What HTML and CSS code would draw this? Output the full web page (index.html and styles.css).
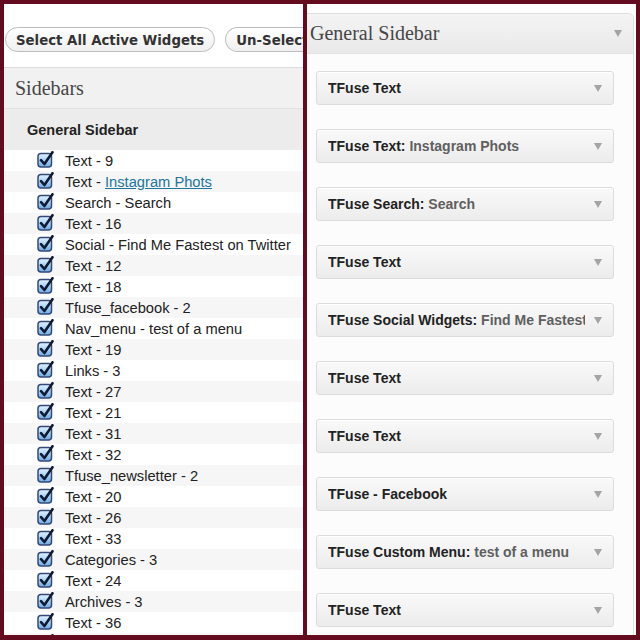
FILE: index.html
```html
<!DOCTYPE html>
<html>
<head>
<meta charset="utf-8">
<link rel="stylesheet" href="styles.css">
</head>
<body>
<svg class="defs" width="0" height="0" aria-hidden="true">
  <defs>
    <linearGradient id="cbfill" x1="0" y1="0" x2="0" y2="1">
      <stop offset="0" stop-color="#e4f3ff"/>
      <stop offset="0.5" stop-color="#a9d2f5"/>
      <stop offset="1" stop-color="#6fa9e0"/>
    </linearGradient>
  </defs>
</svg>
<div class="frame">
  <section class="left">
    <div class="actions">
      <span class="btn">Select All Active Widgets</span>
      <span class="btn btn-cut">Un-Select All Active Widgets</span>
    </div>
    <h2 class="sidebars-title">Sidebars</h2>
    <h3 class="group-title">General Sidebar</h3>
    <ul class="list">
      <li><svg class="cb" viewBox="0 0 17 17"><rect x="1" y="2.5" width="13.5" height="13.5" rx="3" fill="url(#cbfill)" stroke="#34497a" stroke-width="1.5"/><path d="M4 9.2 L7.4 13 L15.5 1.2" fill="none" stroke="#0f1a33" stroke-width="2.6" stroke-linecap="round" stroke-linejoin="round"/></svg><span>Text - 9</span></li>
      <li><svg class="cb" viewBox="0 0 17 17"><rect x="1" y="2.5" width="13.5" height="13.5" rx="3" fill="url(#cbfill)" stroke="#34497a" stroke-width="1.5"/><path d="M4 9.2 L7.4 13 L15.5 1.2" fill="none" stroke="#0f1a33" stroke-width="2.6" stroke-linecap="round" stroke-linejoin="round"/></svg><span>Text - <a class="lnk">Instagram Phots</a></span></li>
      <li><svg class="cb" viewBox="0 0 17 17"><rect x="1" y="2.5" width="13.5" height="13.5" rx="3" fill="url(#cbfill)" stroke="#34497a" stroke-width="1.5"/><path d="M4 9.2 L7.4 13 L15.5 1.2" fill="none" stroke="#0f1a33" stroke-width="2.6" stroke-linecap="round" stroke-linejoin="round"/></svg><span>Search - Search</span></li>
      <li><svg class="cb" viewBox="0 0 17 17"><rect x="1" y="2.5" width="13.5" height="13.5" rx="3" fill="url(#cbfill)" stroke="#34497a" stroke-width="1.5"/><path d="M4 9.2 L7.4 13 L15.5 1.2" fill="none" stroke="#0f1a33" stroke-width="2.6" stroke-linecap="round" stroke-linejoin="round"/></svg><span>Text - 16</span></li>
      <li><svg class="cb" viewBox="0 0 17 17"><rect x="1" y="2.5" width="13.5" height="13.5" rx="3" fill="url(#cbfill)" stroke="#34497a" stroke-width="1.5"/><path d="M4 9.2 L7.4 13 L15.5 1.2" fill="none" stroke="#0f1a33" stroke-width="2.6" stroke-linecap="round" stroke-linejoin="round"/></svg><span>Social - Find Me Fastest on Twitter</span></li>
      <li><svg class="cb" viewBox="0 0 17 17"><rect x="1" y="2.5" width="13.5" height="13.5" rx="3" fill="url(#cbfill)" stroke="#34497a" stroke-width="1.5"/><path d="M4 9.2 L7.4 13 L15.5 1.2" fill="none" stroke="#0f1a33" stroke-width="2.6" stroke-linecap="round" stroke-linejoin="round"/></svg><span>Text - 12</span></li>
      <li><svg class="cb" viewBox="0 0 17 17"><rect x="1" y="2.5" width="13.5" height="13.5" rx="3" fill="url(#cbfill)" stroke="#34497a" stroke-width="1.5"/><path d="M4 9.2 L7.4 13 L15.5 1.2" fill="none" stroke="#0f1a33" stroke-width="2.6" stroke-linecap="round" stroke-linejoin="round"/></svg><span>Text - 18</span></li>
      <li><svg class="cb" viewBox="0 0 17 17"><rect x="1" y="2.5" width="13.5" height="13.5" rx="3" fill="url(#cbfill)" stroke="#34497a" stroke-width="1.5"/><path d="M4 9.2 L7.4 13 L15.5 1.2" fill="none" stroke="#0f1a33" stroke-width="2.6" stroke-linecap="round" stroke-linejoin="round"/></svg><span>Tfuse_facebook - 2</span></li>
      <li><svg class="cb" viewBox="0 0 17 17"><rect x="1" y="2.5" width="13.5" height="13.5" rx="3" fill="url(#cbfill)" stroke="#34497a" stroke-width="1.5"/><path d="M4 9.2 L7.4 13 L15.5 1.2" fill="none" stroke="#0f1a33" stroke-width="2.6" stroke-linecap="round" stroke-linejoin="round"/></svg><span>Nav_menu - test of a menu</span></li>
      <li><svg class="cb" viewBox="0 0 17 17"><rect x="1" y="2.5" width="13.5" height="13.5" rx="3" fill="url(#cbfill)" stroke="#34497a" stroke-width="1.5"/><path d="M4 9.2 L7.4 13 L15.5 1.2" fill="none" stroke="#0f1a33" stroke-width="2.6" stroke-linecap="round" stroke-linejoin="round"/></svg><span>Text - 19</span></li>
      <li><svg class="cb" viewBox="0 0 17 17"><rect x="1" y="2.5" width="13.5" height="13.5" rx="3" fill="url(#cbfill)" stroke="#34497a" stroke-width="1.5"/><path d="M4 9.2 L7.4 13 L15.5 1.2" fill="none" stroke="#0f1a33" stroke-width="2.6" stroke-linecap="round" stroke-linejoin="round"/></svg><span>Links - 3</span></li>
      <li><svg class="cb" viewBox="0 0 17 17"><rect x="1" y="2.5" width="13.5" height="13.5" rx="3" fill="url(#cbfill)" stroke="#34497a" stroke-width="1.5"/><path d="M4 9.2 L7.4 13 L15.5 1.2" fill="none" stroke="#0f1a33" stroke-width="2.6" stroke-linecap="round" stroke-linejoin="round"/></svg><span>Text - 27</span></li>
      <li><svg class="cb" viewBox="0 0 17 17"><rect x="1" y="2.5" width="13.5" height="13.5" rx="3" fill="url(#cbfill)" stroke="#34497a" stroke-width="1.5"/><path d="M4 9.2 L7.4 13 L15.5 1.2" fill="none" stroke="#0f1a33" stroke-width="2.6" stroke-linecap="round" stroke-linejoin="round"/></svg><span>Text - 21</span></li>
      <li><svg class="cb" viewBox="0 0 17 17"><rect x="1" y="2.5" width="13.5" height="13.5" rx="3" fill="url(#cbfill)" stroke="#34497a" stroke-width="1.5"/><path d="M4 9.2 L7.4 13 L15.5 1.2" fill="none" stroke="#0f1a33" stroke-width="2.6" stroke-linecap="round" stroke-linejoin="round"/></svg><span>Text - 31</span></li>
      <li><svg class="cb" viewBox="0 0 17 17"><rect x="1" y="2.5" width="13.5" height="13.5" rx="3" fill="url(#cbfill)" stroke="#34497a" stroke-width="1.5"/><path d="M4 9.2 L7.4 13 L15.5 1.2" fill="none" stroke="#0f1a33" stroke-width="2.6" stroke-linecap="round" stroke-linejoin="round"/></svg><span>Text - 32</span></li>
      <li><svg class="cb" viewBox="0 0 17 17"><rect x="1" y="2.5" width="13.5" height="13.5" rx="3" fill="url(#cbfill)" stroke="#34497a" stroke-width="1.5"/><path d="M4 9.2 L7.4 13 L15.5 1.2" fill="none" stroke="#0f1a33" stroke-width="2.6" stroke-linecap="round" stroke-linejoin="round"/></svg><span>Tfuse_newsletter - 2</span></li>
      <li><svg class="cb" viewBox="0 0 17 17"><rect x="1" y="2.5" width="13.5" height="13.5" rx="3" fill="url(#cbfill)" stroke="#34497a" stroke-width="1.5"/><path d="M4 9.2 L7.4 13 L15.5 1.2" fill="none" stroke="#0f1a33" stroke-width="2.6" stroke-linecap="round" stroke-linejoin="round"/></svg><span>Text - 20</span></li>
      <li><svg class="cb" viewBox="0 0 17 17"><rect x="1" y="2.5" width="13.5" height="13.5" rx="3" fill="url(#cbfill)" stroke="#34497a" stroke-width="1.5"/><path d="M4 9.2 L7.4 13 L15.5 1.2" fill="none" stroke="#0f1a33" stroke-width="2.6" stroke-linecap="round" stroke-linejoin="round"/></svg><span>Text - 26</span></li>
      <li><svg class="cb" viewBox="0 0 17 17"><rect x="1" y="2.5" width="13.5" height="13.5" rx="3" fill="url(#cbfill)" stroke="#34497a" stroke-width="1.5"/><path d="M4 9.2 L7.4 13 L15.5 1.2" fill="none" stroke="#0f1a33" stroke-width="2.6" stroke-linecap="round" stroke-linejoin="round"/></svg><span>Text - 33</span></li>
      <li><svg class="cb" viewBox="0 0 17 17"><rect x="1" y="2.5" width="13.5" height="13.5" rx="3" fill="url(#cbfill)" stroke="#34497a" stroke-width="1.5"/><path d="M4 9.2 L7.4 13 L15.5 1.2" fill="none" stroke="#0f1a33" stroke-width="2.6" stroke-linecap="round" stroke-linejoin="round"/></svg><span>Categories - 3</span></li>
      <li><svg class="cb" viewBox="0 0 17 17"><rect x="1" y="2.5" width="13.5" height="13.5" rx="3" fill="url(#cbfill)" stroke="#34497a" stroke-width="1.5"/><path d="M4 9.2 L7.4 13 L15.5 1.2" fill="none" stroke="#0f1a33" stroke-width="2.6" stroke-linecap="round" stroke-linejoin="round"/></svg><span>Text - 24</span></li>
      <li><svg class="cb" viewBox="0 0 17 17"><rect x="1" y="2.5" width="13.5" height="13.5" rx="3" fill="url(#cbfill)" stroke="#34497a" stroke-width="1.5"/><path d="M4 9.2 L7.4 13 L15.5 1.2" fill="none" stroke="#0f1a33" stroke-width="2.6" stroke-linecap="round" stroke-linejoin="round"/></svg><span>Archives - 3</span></li>
      <li><svg class="cb" viewBox="0 0 17 17"><rect x="1" y="2.5" width="13.5" height="13.5" rx="3" fill="url(#cbfill)" stroke="#34497a" stroke-width="1.5"/><path d="M4 9.2 L7.4 13 L15.5 1.2" fill="none" stroke="#0f1a33" stroke-width="2.6" stroke-linecap="round" stroke-linejoin="round"/></svg><span>Text - 36</span></li>
      <li class="partial"><svg class="cb" viewBox="0 0 17 17"><rect x="1" y="2.5" width="13.5" height="13.5" rx="3" fill="url(#cbfill)" stroke="#34497a" stroke-width="1.5"/><path d="M4 9.2 L7.4 13 L15.5 1.2" fill="none" stroke="#0f1a33" stroke-width="2.6" stroke-linecap="round" stroke-linejoin="round"/></svg></li>
    </ul>
  </section>
  <section class="right">
    <div class="sidebar-box">
      <div class="sidebar-head">
        <h2 class="sidebar-name">General Sidebar</h2>
        <span class="arrow"></span>
      </div>
      <div class="widgets">
        <div class="widget"><h4 class="wt">TFuse Text</h4><span class="arrow"></span></div>
        <div class="widget"><h4 class="wt">TFuse Text:<span class="in"> Instagram Phots</span></h4><span class="arrow"></span></div>
        <div class="widget"><h4 class="wt">TFuse Search:<span class="in"> Search</span></h4><span class="arrow"></span></div>
        <div class="widget"><h4 class="wt">TFuse Text</h4><span class="arrow"></span></div>
        <div class="widget"><h4 class="wt">TFuse Social Widgets:<span class="in"> Find Me Fastest on Twitter</span></h4><span class="arrow"></span></div>
        <div class="widget"><h4 class="wt">TFuse Text</h4><span class="arrow"></span></div>
        <div class="widget"><h4 class="wt">TFuse Text</h4><span class="arrow"></span></div>
        <div class="widget"><h4 class="wt">TFuse - Facebook</h4><span class="arrow"></span></div>
        <div class="widget"><h4 class="wt">TFuse Custom Menu:<span class="in"> test of a menu</span></h4><span class="arrow"></span></div>
        <div class="widget"><h4 class="wt">TFuse Text</h4><span class="arrow"></span></div>
      </div>
    </div>
  </section>
</div>
</body>
</html>
```

FILE: styles.css
```css
html, body {
  margin: 0;
  padding: 0;
}
body {
  width: 640px;
  height: 640px;
  background: #650b20;
  overflow: hidden;
}
.defs {
  position: absolute;
  width: 0;
  height: 0;
}
.frame {
  display: flex;
  gap: 4px;
  padding: 4px 4px 5px 4px;
  height: 640px;
  box-sizing: border-box;
}
.left {
  width: 299px;
  flex: none;
  background: #ffffff;
  overflow: hidden;
}
.right {
  width: 329px;
  flex: none;
  background: #fdfdfd;
  overflow: hidden;
  padding: 9px 2px 0 0;
  box-sizing: border-box;
}

/* left column */
.actions {
  display: flex;
  gap: 10px;
  padding: 23px 0 0 1px;
  height: 63px;
  box-sizing: border-box;
  white-space: nowrap;
  overflow: hidden;
}
.btn {
  flex: none;
  height: 25px;
  box-sizing: border-box;
  border: 1px solid #bdbdbd;
  border-radius: 13px;
  background: linear-gradient(#ffffff, #efefef);
  padding: 0 10px;
  font-family: "DejaVu Sans Condensed", "DejaVu Sans", sans-serif;
  font-stretch: condensed;
  font-weight: bold;
  font-size: 14.8px;
  line-height: 23px;
  color: #333333;
}
.btn-cut {
  flex: 1 1 auto;
  min-width: 0;
  overflow: hidden;
  border-right: 0;
  border-top-right-radius: 0;
  border-bottom-right-radius: 0;
}
.sidebars-title {
  margin: 0;
  border-top: 1px solid #dcdcdc;
  background: #f1f1f1;
  height: 41px;
  box-sizing: border-box;
  padding-left: 11px;
  font-family: "Liberation Serif", serif;
  font-weight: normal;
  font-size: 20px;
  line-height: 41px;
  color: #464646;
}
.group-title {
  margin: 0;
  border-top: 1px solid #e2e2e2;
  background: #ececec;
  height: 42px;
  box-sizing: border-box;
  padding-left: 23px;
  font-family: "Liberation Sans", Arial, sans-serif;
  font-weight: bold;
  font-size: 14.5px;
  line-height: 43px;
  color: #222222;
}
.list {
  list-style: none;
  margin: 0;
  padding: 0;
}
.list li {
  display: flex;
  align-items: center;
  height: 21px;
  padding-left: 33px;
  font-family: "Liberation Sans", Arial, sans-serif;
  font-size: 14.7px;
  color: #222222;
  white-space: nowrap;
}
.list li:nth-child(even) {
  background: #f6f6f6;
}
.cb {
  width: 17px;
  height: 17px;
  flex: none;
  margin-right: 11px;
  margin-top: -2px;
}
.lnk {
  color: #21759b;
  text-decoration: underline;
}

/* right column */
.sidebar-box {
  border: 1px solid #dfdfdf;
  border-left: 0;
  border-top-right-radius: 6px;
  background: #fcfcfc;
  height: 700px;
}
.sidebar-head {
  display: flex;
  align-items: center;
  justify-content: space-between;
  height: 39px;
  border-bottom: 1px solid #e3e3e3;
  background: linear-gradient(#f4f4f4, #e9e9e9);
  border-top-right-radius: 6px;
  padding: 0 11px 0 3px;
}
.sidebar-name {
  margin: 0;
  font-family: "Liberation Serif", serif;
  font-weight: normal;
  font-size: 20px;
  color: #464646;
  white-space: nowrap;
}
.arrow {
  flex: none;
  width: 0;
  height: 0;
  border-left: 4px solid transparent;
  border-right: 4px solid transparent;
  border-top: 7px solid #a4a4a4;
}
.widgets {
  display: flex;
  flex-direction: column;
  gap: 24px;
  padding: 17px 19px 0 9px;
}
.widget {
  display: flex;
  align-items: center;
  height: 34px;
  box-sizing: border-box;
  border: 1px solid #dcdcdc;
  border-radius: 3px;
  background: linear-gradient(#f9f9f9, #ececec);
  box-shadow: inset 0 1px 0 #ffffff;
  padding: 0 11px 0 11px;
}
.wt {
  margin: 0;
  width: 257px;
  flex: none;
  overflow: hidden;
  white-space: nowrap;
  font-family: "Liberation Sans", Arial, sans-serif;
  font-weight: bold;
  font-size: 14px;
  color: #222222;
}
.in {
  color: #5f5f5f;
}
.widget .arrow {
  margin-left: auto;
}
```
